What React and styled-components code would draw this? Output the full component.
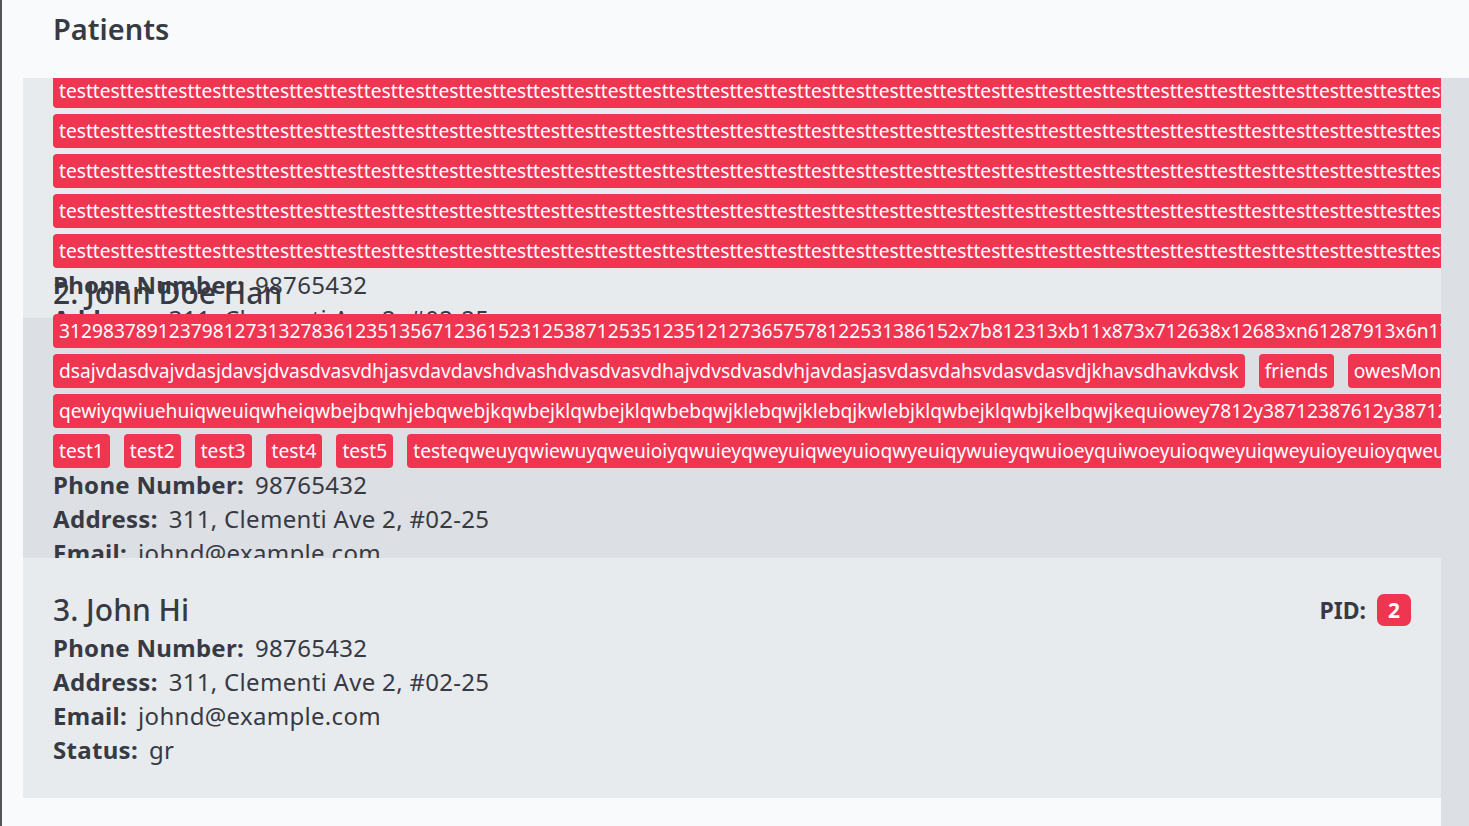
import React from "react";
import styled, { createGlobalStyle } from "styled-components";

const GlobalStyle = createGlobalStyle`
  html, body {
    margin: 0;
    padding: 0;
    background: #f9fafb;
  }
  body {
    font-family: "Noto Sans", "Open Sans", sans-serif;
    color: #373a43;
  }
`;

const Page = styled.div`
  height: 100vh;
  box-sizing: border-box;
  border-left: 2px solid #555555;
  background: #f9fafb;
  display: flex;
  flex-direction: column;
  overflow: hidden;
`;

const Header = styled.header`
  height: 78px;
  flex: none;
  box-sizing: border-box;
  padding: 8px 0 0 51px;
`;

const Title = styled.h1`
  margin: 0;
  font-size: 29px;
  font-weight: 600;
  line-height: 41px;
  color: #373a43;
`;

const Main = styled.main`
  flex: 1;
  min-height: 0;
  display: flex;
  padding-left: 21px;
`;

const List = styled.ul`
  list-style: none;
  margin: 0;
  padding: 0;
  flex: 1;
  min-width: 0;
  overflow: hidden;
  background: #f9fafb;
`;

const ScrollTrack = styled.div`
  width: 28px;
  flex: none;
  background: #dcdfe3;
`;

const Cell = styled.li`
  position: relative;
  height: 240px;
  box-sizing: border-box;
  padding: 0 30px;
  display: flex;
  flex-direction: column;
  justify-content: center;
  background: ${(p) => (p.$alt ? "#dcdfe3" : "#e8ebee")};
`;

const Body = styled.div`
  width: ${(p) => (p.$wrapWidth ? `${p.$wrapWidth}px` : "100%")};
  flex: none;
  display: flex;
  flex-direction: column;
`;

const NameRow = styled.div`
  display: flex;
  align-items: center;
  justify-content: space-between;
  height: 42px;
`;

const Name = styled.h2`
  margin: 0;
  font-size: 30px;
  font-weight: 500;
  line-height: 42px;
  white-space: nowrap;
  color: #373a43;
`;

const Pid = styled.div`
  display: flex;
  align-items: center;
  gap: 11px;
  font-size: 23px;
  font-weight: 700;
  color: #373a43;
  white-space: nowrap;
`;

const PidBadge = styled.span`
  display: inline-flex;
  align-items: center;
  justify-content: center;
  width: 34px;
  height: 32px;
  border-radius: 7px;
  background: #ef3550;
  color: #ffffff;
  font-size: 21px;
  font-weight: 700;
`;

const Tags = styled.div`
  display: flex;
  flex-wrap: wrap;
  gap: 6px 14px;
`;

const Tag = styled.span`
  display: inline-block;
  height: 34px;
  line-height: 34px;
  padding: 0 6px;
  border-radius: 4px;
  background: #ef3550;
  color: #ffffff;
  font-size: 19.2px;
  white-space: nowrap;
`;

const Field = styled.div`
  display: flex;
  gap: 11px;
  height: 34px;
  line-height: 34px;
  font-size: 24px;
  letter-spacing: 0.3px;
  white-space: nowrap;
`;

const Label = styled.span`
  font-weight: 700;
`;

const Value = styled.span`
  font-weight: 400;
`;

const longTest = "test".repeat(50);

const patients = [
  {
    name: "1. John Doe",
    pid: 0,
    wrapWidth: 2000,
    tags: [longTest, longTest, longTest, longTest, longTest, longTest],
    status: "gr",
  },
  {
    name: "2. John Doe Han",
    pid: 1,
    wrapWidth: 2000,
    tags: [
      "3129837891237981273132783612351356712361523125387125351235121273657578122531386152x7b812313xb11x873x712638x12683xn61287913x6n17826n3x9812739812x7398127",
      "dsajvdasdvajvdasjdavsjdvasdvasvdhjasvdavdavshdvashdvasdvasvdhajvdvsdvasdvhjavdasjasvdasvdahsvdasvdasvdjkhavsdhavkdvsk",
      "friends",
      "owesMoney",
      "qewiyqwiuehuiqweuiqwheiqwbejbqwhjebqwebjkqwbejklqwbejklqwbebqwjklebqwjklebqjkwlebjklqwbejklqwbjkelbqwjkequiowey7812y38712387612y3871263871263812y3uiqwyeuiqwyeuiqwyeuiqweuiqwyeuiqwyeuiqwyeuiyqweuiqwyeuiqywe",
      "test1",
      "test2",
      "test3",
      "test4",
      "test5",
      "testeqweuyqwiewuyqweuioiyqwuieyqweyuiqweyuioqwyeuiqywuieyqwuioeyquiwoeyuioqweyuiqweyuioyeuioyqweuiyqweuiyqwe",
    ],
    status: "gr",
  },
  {
    name: "3. John Hi",
    pid: 2,
    tags: [],
    status: "gr",
  },
];

function PatientCell({ patient, alt }) {
  return (
    <Cell $alt={alt}>
      <Body $wrapWidth={patient.wrapWidth}>
        <NameRow>
          <Name>{patient.name}</Name>
          <Pid>
            PID:
            <PidBadge>{patient.pid}</PidBadge>
          </Pid>
        </NameRow>
        {patient.tags.length > 0 && (
          <Tags>
            {patient.tags.map((t, i) => (
              <Tag key={i}>{t}</Tag>
            ))}
          </Tags>
        )}
        <Field>
          <Label>Phone Number:</Label>
          <Value>98765432</Value>
        </Field>
        <Field>
          <Label>Address:</Label>
          <Value>311, Clementi Ave 2, #02-25</Value>
        </Field>
        <Field>
          <Label>Email:</Label>
          <Value>johnd@example.com</Value>
        </Field>
        <Field>
          <Label>Status:</Label>
          <Value>{patient.status}</Value>
        </Field>
      </Body>
    </Cell>
  );
}

export default function App() {
  return (
    <>
      <GlobalStyle />
      <Page>
        <Header>
          <Title>Patients</Title>
        </Header>
        <Main>
          <List>
            {patients.map((p, i) => (
              <PatientCell key={i} patient={p} alt={i % 2 === 1} />
            ))}
          </List>
          <ScrollTrack />
        </Main>
      </Page>
    </>
  );
}
